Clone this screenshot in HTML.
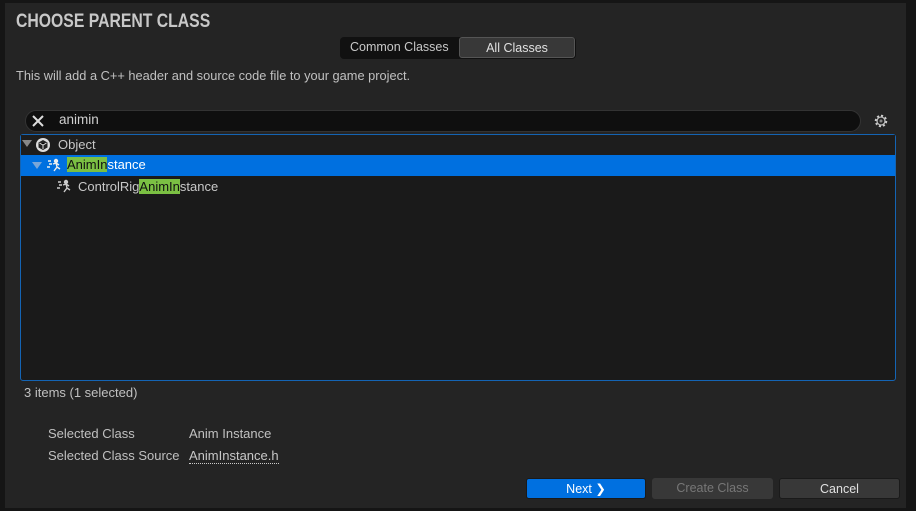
<!DOCTYPE html>
<html><head><style>
body{margin:0;width:916px;height:511px;background:#151515;font-family:"Liberation Sans",sans-serif;overflow:hidden;position:relative;color:#c0c0c0}
.p{position:absolute;left:5px;top:3px;width:901px;height:505px;background:#242424}
.a{position:absolute;white-space:nowrap}
.hl{background:#7bc043;color:#111}
.btn{position:absolute;top:478px;height:21px;border-radius:3px;font-size:12.5px;text-align:center;line-height:21px;box-sizing:border-box}
</style></head><body>
<div class="p"></div>
<div class="a" style="left:16px;top:11px;font-size:19px;font-weight:bold;color:#c8c8c8;transform:scaleX(0.83);transform-origin:left">CHOOSE PARENT CLASS</div>
<div class="a" style="left:340px;top:37px;width:236px;height:22px;background:#111;border-radius:4px"></div>
<div class="a" style="left:350px;top:40px;font-size:12.5px;color:#c8c8c8">Common Classes</div>
<div class="a" style="left:459px;top:37px;width:116px;height:21px;background:#383838;border-radius:3px;border:1px solid #555;box-sizing:border-box;text-align:center;font-size:12.5px;line-height:20px;color:#e0e0e0">All Classes</div>
<div class="a" style="left:16px;top:68px;font-size:12.8px;color:#c0c0c0">This will add a C++ header and source code file to your game project.</div>
<div class="a" style="left:25px;top:110px;width:836px;height:22px;background:#0f0f0f;border:1px solid #333;border-radius:11px;box-sizing:border-box"></div>
<svg class="a" style="left:31px;top:114px" width="14" height="14"><path d="M2 2L12 12M12 2L2 12" stroke="#ddd" stroke-width="2"/></svg>
<div class="a" style="left:59px;top:112px;font-size:13.5px;color:#d0d0d0">animin</div>
<svg class="a" style="left:873px;top:113px" width="16" height="16"><circle cx="8" cy="8" r="5" fill="none" stroke="#ccc" stroke-width="2.5" stroke-dasharray="2 1.9"/><circle cx="8" cy="8" r="4" fill="none" stroke="#bbb" stroke-width="1.3"/><circle cx="8" cy="8" r="1.5" fill="#888"/></svg>
<div class="a" style="left:20px;top:134px;width:876px;height:247px;background:#1a1a1a;border:1px solid #1464b4;border-radius:3px;box-sizing:border-box"></div>
<div class="a" style="left:21px;top:135px;width:874px;height:20px;background:#1d1d1d"></div>
<div class="a" style="left:21px;top:155px;width:874px;height:21px;background:#0070e0"></div>
<div class="a" style="left:22px;top:140px;width:0;height:0;border-left:5px solid transparent;border-right:5px solid transparent;border-top:7px solid #888"></div>
<svg class="a" style="left:35px;top:137px" width="16" height="16"><circle cx="8" cy="8" r="7" fill="#ddd"/><path d="M8 3L12.5 5.5V10.5L8 13L3.5 10.5V5.5Z" fill="#222"/><path d="M8 8V12M4.5 6L8 8L11.5 6" stroke="#ddd" stroke-width="1"/></svg>
<div class="a" style="left:58px;top:137px;font-size:13px;color:#c8c8c8">Object</div>
<div class="a" style="left:32px;top:162px;width:0;height:0;border-left:5px solid transparent;border-right:5px solid transparent;border-top:7px solid #7aa6d8"></div>
<svg class="a" style="left:46px;top:158px" width="16" height="16"><g stroke="#eee" stroke-width="1.4" fill="none"><path d="M2 3H5M3 6H6M1 9H4"/><circle cx="10" cy="3" r="1.5" fill="#eee"/><path d="M7 6L10 5L11 9L8 13M11 9L14 11M10 5L13 7"/></g></svg>
<div class="a" style="left:67px;top:157px;font-size:13px;color:#fff"><span class="hl">AnimIn</span>stance</div>
<svg class="a" style="left:56px;top:179px" width="16" height="16"><g stroke="#ccc" stroke-width="1.4" fill="none"><path d="M2 3H5M3 6H6M1 9H4"/><circle cx="10" cy="3" r="1.5" fill="#ccc"/><path d="M7 6L10 5L11 9L8 13M11 9L14 11M10 5L13 7"/></g></svg>
<div class="a" style="left:78px;top:179px;font-size:13px;color:#c8c8c8">ControlRig<span class="hl">AnimIn</span>stance</div>
<div class="a" style="left:24px;top:385px;font-size:13px;color:#c0c0c0">3 items (1 selected)</div>
<div class="a" style="left:48px;top:426px;font-size:13px;color:#c0c0c0">Selected Class</div>
<div class="a" style="left:189px;top:426px;font-size:13px;color:#c0c0c0">Anim Instance</div>
<div class="a" style="left:48px;top:448px;font-size:13px;color:#c0c0c0">Selected Class Source</div>
<div class="a" style="left:189px;top:448px;font-size:13px;color:#c8c8c8;border-bottom:1px dotted #ccc">AnimInstance.h</div>
<div class="btn" style="left:526px;width:120px;background:#0070e0;color:#fff;border:1px solid #1a1a1a">Next ❯</div>
<div class="btn" style="left:652px;width:121px;background:#383838;color:#777">Create Class</div>
<div class="btn" style="left:779px;width:121px;background:#383838;color:#e0e0e0;border:1px solid #1a1a1a">Cancel</div>
</body></html>
